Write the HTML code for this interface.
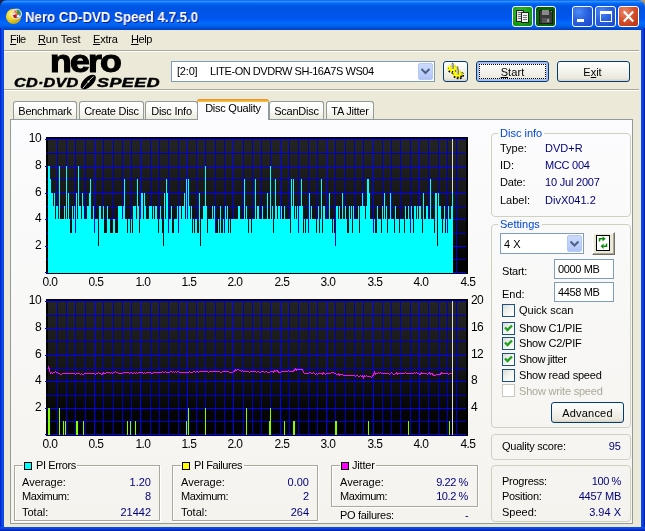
<!DOCTYPE html>
<html lang="en"><head><meta charset="utf-8"><title>Nero CD-DVD Speed 4.7.5.0</title>
<style>
html,body{margin:0;padding:0;}
body{width:645px;height:531px;overflow:hidden;background:#ece9d8;position:relative;
 font-family:"Liberation Sans",sans-serif;font-size:11px;color:#000;line-height:13px;}
*{box-sizing:border-box;}
.a{position:absolute;white-space:nowrap;}
.t{position:absolute;white-space:nowrap;line-height:13px;height:13px;}
.r{text-align:right;}
.nv{color:#00007b;}
.bl{color:#0046d5;}
#title{left:0;top:0;width:645px;height:30px;border-radius:7px 7px 0 0;
 background:linear-gradient(to bottom,#0058ee 0%,#3593ff 4%,#288eff 6%,#127dff 8%,#036ffc 10%,#0262ee 14%,#0057e5 20%,#0054e3 24%,#0055eb 56%,#005bf5 66%,#026afe 76%,#0062ef 86%,#0052d6 92%,#0048cc 96%,#0040c4 100%);}
#cl{left:0;top:0;width:8px;height:8px;background:#1c2350;}
#cr{left:637px;top:0;width:8px;height:8px;background:#b59563;}
#bl{left:0;top:28px;width:4px;height:503px;background:linear-gradient(to right,#0019cf 0,#0831d9 25%,#0d4fe6 50%,#0a4ce2 75%,#0845de 100%);}
#br{left:641px;top:28px;width:4px;height:503px;background:linear-gradient(to right,#0d4fe6 0,#0845de 40%,#0831d9 70%,#00138c 100%);}
#bb{left:0;top:527px;width:645px;height:4px;background:linear-gradient(to bottom,#0d4fe6 0,#0845de 40%,#0831d9 70%,#00138c 100%);}
#ttext{left:24.5px;top:9px;font-size:14px;font-weight:bold;color:#fff;line-height:16px;text-shadow:1px 1px 0 #0a1883;transform:scaleX(0.947);transform-origin:0 0;}
.tb{position:absolute;top:6px;width:21px;height:21px;border:1px solid #fff;border-radius:3px;}
.tbb{background:radial-gradient(circle at 30% 25%,#4d8bf5 0,#2a62e0 45%,#1b47c9 100%);}
.tbx{background:radial-gradient(circle at 30% 25%,#ea8a6c 0,#d8502c 45%,#b92f12 100%);}
.tbg1{background:radial-gradient(circle at 40% 35%,#35c035 0,#16a016 60%,#0b7d0b 100%);}
.tbg2{background:radial-gradient(circle at 50% 50%,#0c7a0c 0,#086808 60%,#035203 100%);}
.menu{top:33px;font-size:11px;}
.menu u{text-decoration:underline;}
.hl{position:absolute;height:2px;border-top:1px solid #aca899;border-bottom:1px solid #fff;}
.combo{position:absolute;background:#fff;border:1px solid #7f9db9;}
.cbtn{position:absolute;border-radius:2px;border:1px solid #b4c8f6;background:linear-gradient(to bottom,#cbd9fc 0,#c1d2fb 50%,#b0c4f5 100%);}
.btn{position:absolute;border:1px solid #003c74;border-radius:3px;background:linear-gradient(to bottom,#fff 0,#f4f3ee 45%,#ece9de 85%,#d6d0c5 100%);text-align:center;}
.tab{position:absolute;top:101px;height:18px;border:1px solid #919b9c;border-bottom:none;border-radius:3px 3px 0 0;background:linear-gradient(to bottom,#fff 0,#fafaf7 50%,#eceadd 100%);text-align:center;line-height:19px;font-size:11px;letter-spacing:-0.25px;}
.tabsel{top:99px;height:21px;background:#fcfcfe;border-top:none;z-index:3;line-height:19px;}
.tabsel:before{content:"";position:absolute;left:-1px;right:-1px;top:0;height:3px;background:linear-gradient(to bottom,#e68b2c 0,#ffc73c 100%);border-radius:3px 3px 0 0;}
#pane{left:10px;top:119px;width:623px;height:405px;border:1px solid #919b9c;background:linear-gradient(to bottom,#fcfcfe 0,#f4f3ee 100%);}
.gb{position:absolute;border:1px solid #d0d0bf;border-radius:4px;}
.gbe{position:absolute;border:1px solid #aca899;box-shadow:1px 1px 0 #fff, inset 1px 1px 0 #fff;}
.lg{position:absolute;line-height:13px;height:13px;padding:0 2px;white-space:nowrap;}
.edit{position:absolute;background:#fff;border:1px solid #7f9db9;}
.cb{position:absolute;width:13px;height:13px;border:1px solid #1c5180;background:linear-gradient(135deg,#dcdcd7 0,#f3f3f0 50%,#fff 100%);}
.cbd{border-color:#cac8bb;background:#fff;}
.sq{position:absolute;width:8px;height:8px;border:1px solid #000;}
svg.charts{position:absolute;left:0;top:0;}
.ax{position:absolute;font-size:12px;line-height:12px;height:12px;white-space:nowrap;letter-spacing:-0.6px;}

.t,.ax,.tab,.lg,#ttext,#nero,#cddvd,#speed{will-change:transform;}

</style></head>
<body>
<div class="a" id="cl"></div><div class="a" id="cr"></div>
<div class="a" id="title"></div>
<div class="a" id="bl"></div><div class="a" id="br"></div><div class="a" id="bb"></div>
<svg class="a" style="left:5px;top:7px" width="18" height="18" viewBox="0 0 18 18">
<defs><radialGradient id="gd" cx="0.35" cy="0.35" r="0.75"><stop offset="0" stop-color="#fff27a"/><stop offset="0.5" stop-color="#e8cf2a"/><stop offset="1" stop-color="#b89810"/></radialGradient></defs>
<circle cx="8.6" cy="9.4" r="7.7" fill="url(#gd)"/>
<circle cx="11.6" cy="6.9" r="4.9" fill="#d9dde2" stroke="#f4f4f4" stroke-width="0.8"/>
<path d="M11.6 6.9 L11.6 2.6 A4.3 4.3 0 0 1 15.9 6.9 Z" fill="#3a9a3a"/>
<path d="M11.6 6.9 L15.9 6.9 A4.3 4.3 0 0 1 11.6 11.2 Z" fill="#2a8fe0"/>
<path d="M11.6 6.9 L11.6 11.2 A4.3 4.3 0 0 1 7.6 8.4 Z" fill="#c01818"/>
<path d="M9.6 3.4 L13.4 9.4" stroke="#ff6a3a" stroke-width="1.5" fill="none"/>
<circle cx="13.3" cy="9.2" r="1.2" fill="#fff"/>
<circle cx="8.4" cy="5.6" r="0.8" fill="#ffd800"/>
</svg>
<div class="a" id="ttext">Nero CD-DVD Speed 4.7.5.0</div>
<div class="tb tbg1" style="left:512px"></div>
<div class="tb tbg2" style="left:535px"></div>
<div class="tb tbb" style="left:572px"></div>
<div class="tb tbb" style="left:595px"></div>
<div class="tb tbx" style="left:618px"></div>
<svg class="a" style="left:512px;top:6px" width="134" height="21" viewBox="0 0 134 21" shape-rendering="crispEdges">
<!-- copy icon -->
<rect x="4" y="4" width="7" height="11" fill="#e4e4e4" stroke="#222" stroke-width="1"/>
<rect x="5.5" y="6" width="4" height="1" fill="#777"/><rect x="5.5" y="8" width="4" height="1" fill="#777"/><rect x="5.5" y="10" width="4" height="1" fill="#777"/><rect x="5.5" y="12" width="4" height="1" fill="#777"/>
<rect x="9.5" y="6.5" width="7" height="10" fill="#f0f0f0" stroke="#222" stroke-width="1"/>
<rect x="11" y="9" width="4" height="1" fill="#777"/><rect x="11" y="11" width="4" height="1" fill="#777"/><rect x="11" y="13" width="4" height="1" fill="#777"/>
<!-- floppy -->
<rect x="27" y="4" width="13" height="13" fill="#3a3a3a" stroke="#1a1a1a" stroke-width="1"/>
<rect x="30" y="4" width="7" height="5" fill="#8a8a8a"/>
<rect x="30" y="11.5" width="8" height="5" fill="#555"/>
<rect x="35" y="12.5" width="2" height="3.5" fill="#999"/>
<rect x="38.5" y="5" width="1" height="1" fill="#2fd02f"/>
<!-- minimize -->
<rect x="65" y="13" width="7" height="3" fill="#fff"/>
<!-- maximize -->
<rect x="88.5" y="5.5" width="11" height="10" fill="none" stroke="#fff" stroke-width="1"/>
<rect x="88" y="5" width="12" height="3" fill="#fff"/>
</svg>
<svg class="a" style="left:618px;top:6px" width="21" height="21" viewBox="0 0 21 21">
<path d="M5.8 5.6 L15.2 15.4 M15.2 5.6 L5.8 15.4" stroke="#fff" stroke-width="2.2" stroke-linecap="butt" fill="none"/>
</svg>
<div class="t menu" style="left:10px;letter-spacing:-0.5px"><u>F</u>ile</div>
<div class="t menu" style="left:37.5px;letter-spacing:-0.1px"><u>R</u>un Test</div>
<div class="t menu" style="left:93px;letter-spacing:-0.2px"><u>E</u>xtra</div>
<div class="t menu" style="left:131px;letter-spacing:-0.4px"><u>H</u>elp</div>
<div class="hl" style="left:4px;top:50px;width:635px"></div>
<div class="hl" style="left:4px;top:89px;width:635px"></div>
<div class="a" id="nero" style="left:49.6px;top:43.6px;font-size:31px;line-height:36px;font-weight:bold;letter-spacing:-1.6px;-webkit-text-stroke:1.1px #000;transform:scaleX(1.15);transform-origin:0 0">nero</div>
<div class="a" id="cddvd" style="left:13.5px;top:75px;font-size:13.5px;line-height:15px;font-weight:bold;font-style:italic;letter-spacing:0.2px;-webkit-text-stroke:0.5px #000;transform:scaleX(1.2);transform-origin:0 0">CD·DVD</div>
<div class="a" id="speed" style="left:96.5px;top:75px;font-size:13.5px;line-height:15px;font-weight:bold;font-style:italic;letter-spacing:0.4px;-webkit-text-stroke:0.5px #000;transform:scaleX(1.32);transform-origin:0 0">SPEED</div>
<svg class="a" style="left:76px;top:72px" width="24" height="20" viewBox="76 72 24 20">
<ellipse cx="88.3" cy="82" rx="9.4" ry="4.8" transform="rotate(-43 88.3 82)" fill="#000"/>
<path d="M82.6 88.6 L87.6 82.6 M89.4 80.6 L93.4 76.4" stroke="#ece9d8" stroke-width="0.9" fill="none"/>
<ellipse cx="88.5" cy="81.6" rx="1.5" ry="0.9" transform="rotate(-43 88.5 81.6)" fill="#ece9d8"/>
</svg>
<div class="combo" style="left:171px;top:61px;width:264px;height:21px"></div>
<div class="t" style="left:177px;top:65px;letter-spacing:-0.2px">[2:0]</div><div class="t" style="left:209.6px;top:65px;letter-spacing:-0.45px">LITE-ON DVDRW SH-16A7S WS04</div>
<div class="cbtn" style="left:418px;top:63px;width:15px;height:17px"></div>
<div class="btn" style="left:443px;top:61px;width:25px;height:21px"></div>
<div class="btn" style="left:476px;top:61px;width:73px;height:21px;box-shadow:inset 0 0 0 2px #a8bdf0"></div>
<div class="a" style="left:479px;top:64px;width:67px;height:15px;border:1px dotted #000"></div>
<div class="t" style="left:476px;top:66px;width:73px;text-align:center;letter-spacing:0.1px"><u>S</u>tart</div>
<div class="btn" style="left:557px;top:61px;width:73px;height:21px"></div>
<div class="t" style="left:556px;top:66px;width:73px;text-align:center;letter-spacing:0px">E<u>x</u>it</div>

<div class="a" id="pane"></div>
<div class="tab" style="left:13px;width:64px">Benchmark</div>
<div class="tab" style="left:79px;width:65px">Create Disc</div>
<div class="tab" style="left:145px;width:53px">Disc Info</div>
<div class="tab tabsel" style="left:197px;width:72px">Disc Quality</div>
<div class="tab" style="left:269px;width:55px">ScanDisc</div>
<div class="tab" style="left:326px;width:48px">TA Jitter</div>

<svg class="charts" width="645" height="531" viewBox="0 0 645 531" shape-rendering="crispEdges">
<defs><linearGradient id="bg1" x1="0" y1="0" x2="0" y2="1"><stop offset="0" stop-color="#242424"/><stop offset="0.5" stop-color="#161616"/><stop offset="0.8" stop-color="#070707"/><stop offset="1" stop-color="#000"/></linearGradient><linearGradient id="bg2" x1="0" y1="0" x2="0" y2="1"><stop offset="0" stop-color="#242424"/><stop offset="0.5" stop-color="#161616"/><stop offset="0.8" stop-color="#070707"/><stop offset="1" stop-color="#000"/></linearGradient></defs>
<rect x="46" y="137" width="422" height="137" fill="#000"/>
<rect x="48" y="139" width="418" height="134" fill="url(#bg1)"/>
<rect x="57" y="139" width="1" height="134" fill="#0000c0"/>
<rect x="66" y="139" width="1" height="134" fill="#0000c0"/>
<rect x="75" y="139" width="1" height="134" fill="#0000c0"/>
<rect x="85" y="139" width="1" height="134" fill="#0000c0"/>
<rect x="94" y="139" width="1" height="134" fill="#0000ff"/>
<rect x="103" y="139" width="1" height="134" fill="#0000c0"/>
<rect x="113" y="139" width="1" height="134" fill="#0000c0"/>
<rect x="122" y="139" width="1" height="134" fill="#0000c0"/>
<rect x="131" y="139" width="1" height="134" fill="#0000c0"/>
<rect x="140" y="139" width="1" height="134" fill="#0000ff"/>
<rect x="150" y="139" width="1" height="134" fill="#0000c0"/>
<rect x="159" y="139" width="1" height="134" fill="#0000c0"/>
<rect x="168" y="139" width="1" height="134" fill="#0000c0"/>
<rect x="178" y="139" width="1" height="134" fill="#0000c0"/>
<rect x="187" y="139" width="1" height="134" fill="#0000ff"/>
<rect x="196" y="139" width="1" height="134" fill="#0000c0"/>
<rect x="205" y="139" width="1" height="134" fill="#0000c0"/>
<rect x="215" y="139" width="1" height="134" fill="#0000c0"/>
<rect x="224" y="139" width="1" height="134" fill="#0000c0"/>
<rect x="233" y="139" width="1" height="134" fill="#0000ff"/>
<rect x="243" y="139" width="1" height="134" fill="#0000c0"/>
<rect x="252" y="139" width="1" height="134" fill="#0000c0"/>
<rect x="261" y="139" width="1" height="134" fill="#0000c0"/>
<rect x="270" y="139" width="1" height="134" fill="#0000c0"/>
<rect x="280" y="139" width="1" height="134" fill="#0000ff"/>
<rect x="289" y="139" width="1" height="134" fill="#0000c0"/>
<rect x="298" y="139" width="1" height="134" fill="#0000c0"/>
<rect x="308" y="139" width="1" height="134" fill="#0000c0"/>
<rect x="317" y="139" width="1" height="134" fill="#0000c0"/>
<rect x="326" y="139" width="1" height="134" fill="#0000ff"/>
<rect x="335" y="139" width="1" height="134" fill="#0000c0"/>
<rect x="345" y="139" width="1" height="134" fill="#0000c0"/>
<rect x="354" y="139" width="1" height="134" fill="#0000c0"/>
<rect x="363" y="139" width="1" height="134" fill="#0000c0"/>
<rect x="373" y="139" width="1" height="134" fill="#0000ff"/>
<rect x="382" y="139" width="1" height="134" fill="#0000c0"/>
<rect x="391" y="139" width="1" height="134" fill="#0000c0"/>
<rect x="400" y="139" width="1" height="134" fill="#0000c0"/>
<rect x="410" y="139" width="1" height="134" fill="#0000c0"/>
<rect x="419" y="139" width="1" height="134" fill="#0000ff"/>
<rect x="428" y="139" width="1" height="134" fill="#0000c0"/>
<rect x="438" y="139" width="1" height="134" fill="#0000c0"/>
<rect x="447" y="139" width="1" height="134" fill="#0000c0"/>
<rect x="456" y="139" width="1" height="134" fill="#0000c0"/>
<rect x="45" y="272" width="421" height="1" fill="#0000ff"/>
<rect x="46" y="259" width="420" height="1" fill="#0000c0"/>
<rect x="45" y="246" width="421" height="1" fill="#0000ff"/>
<rect x="46" y="233" width="420" height="1" fill="#0000c0"/>
<rect x="45" y="219" width="421" height="1" fill="#0000ff"/>
<rect x="46" y="206" width="420" height="1" fill="#0000c0"/>
<rect x="45" y="193" width="421" height="1" fill="#0000ff"/>
<rect x="46" y="179" width="420" height="1" fill="#0000c0"/>
<rect x="45" y="166" width="421" height="1" fill="#0000ff"/>
<rect x="46" y="153" width="420" height="1" fill="#0000c0"/>
<rect x="45" y="139" width="421" height="1" fill="#0000ff"/>
<rect x="452" y="139" width="1" height="134" fill="#dcdcdc"/>
<rect x="48" y="166" width="2" height="107" fill="#00ffff"/>
<rect x="50" y="179" width="1" height="94" fill="#00ffff"/>
<rect x="51" y="193" width="2" height="80" fill="#00ffff"/>
<rect x="53" y="206" width="1" height="67" fill="#00ffff"/>
<rect x="54" y="193" width="1" height="80" fill="#00ffff"/>
<rect x="55" y="219" width="1" height="54" fill="#00ffff"/>
<rect x="56" y="206" width="2" height="67" fill="#00ffff"/>
<rect x="58" y="219" width="1" height="54" fill="#00ffff"/>
<rect x="59" y="166" width="1" height="107" fill="#00ffff"/>
<rect x="60" y="219" width="4" height="54" fill="#00ffff"/>
<rect x="64" y="206" width="1" height="67" fill="#00ffff"/>
<rect x="65" y="219" width="1" height="54" fill="#00ffff"/>
<rect x="66" y="166" width="1" height="107" fill="#00ffff"/>
<rect x="67" y="219" width="1" height="54" fill="#00ffff"/>
<rect x="68" y="193" width="1" height="80" fill="#00ffff"/>
<rect x="69" y="219" width="1" height="54" fill="#00ffff"/>
<rect x="70" y="233" width="2" height="40" fill="#00ffff"/>
<rect x="72" y="206" width="1" height="67" fill="#00ffff"/>
<rect x="73" y="219" width="1" height="54" fill="#00ffff"/>
<rect x="74" y="206" width="1" height="67" fill="#00ffff"/>
<rect x="75" y="233" width="1" height="40" fill="#00ffff"/>
<rect x="76" y="193" width="1" height="80" fill="#00ffff"/>
<rect x="77" y="219" width="1" height="54" fill="#00ffff"/>
<rect x="78" y="166" width="1" height="107" fill="#00ffff"/>
<rect x="79" y="206" width="2" height="67" fill="#00ffff"/>
<rect x="81" y="219" width="1" height="54" fill="#00ffff"/>
<rect x="82" y="193" width="1" height="80" fill="#00ffff"/>
<rect x="83" y="206" width="1" height="67" fill="#00ffff"/>
<rect x="84" y="219" width="3" height="54" fill="#00ffff"/>
<rect x="87" y="206" width="2" height="67" fill="#00ffff"/>
<rect x="89" y="193" width="1" height="80" fill="#00ffff"/>
<rect x="90" y="179" width="1" height="94" fill="#00ffff"/>
<rect x="91" y="219" width="2" height="54" fill="#00ffff"/>
<rect x="93" y="206" width="1" height="67" fill="#00ffff"/>
<rect x="94" y="233" width="1" height="40" fill="#00ffff"/>
<rect x="95" y="219" width="3" height="54" fill="#00ffff"/>
<rect x="98" y="246" width="1" height="27" fill="#00ffff"/>
<rect x="99" y="206" width="2" height="67" fill="#00ffff"/>
<rect x="101" y="219" width="2" height="54" fill="#00ffff"/>
<rect x="103" y="206" width="1" height="67" fill="#00ffff"/>
<rect x="104" y="233" width="3" height="40" fill="#00ffff"/>
<rect x="107" y="206" width="1" height="67" fill="#00ffff"/>
<rect x="108" y="219" width="2" height="54" fill="#00ffff"/>
<rect x="110" y="233" width="3" height="40" fill="#00ffff"/>
<rect x="113" y="219" width="2" height="54" fill="#00ffff"/>
<rect x="115" y="233" width="3" height="40" fill="#00ffff"/>
<rect x="118" y="206" width="4" height="67" fill="#00ffff"/>
<rect x="122" y="219" width="1" height="54" fill="#00ffff"/>
<rect x="123" y="206" width="1" height="67" fill="#00ffff"/>
<rect x="124" y="179" width="1" height="94" fill="#00ffff"/>
<rect x="125" y="219" width="2" height="54" fill="#00ffff"/>
<rect x="127" y="233" width="1" height="40" fill="#00ffff"/>
<rect x="128" y="219" width="2" height="54" fill="#00ffff"/>
<rect x="130" y="233" width="1" height="40" fill="#00ffff"/>
<rect x="131" y="219" width="1" height="54" fill="#00ffff"/>
<rect x="132" y="233" width="1" height="40" fill="#00ffff"/>
<rect x="133" y="206" width="3" height="67" fill="#00ffff"/>
<rect x="136" y="219" width="1" height="54" fill="#00ffff"/>
<rect x="137" y="179" width="1" height="94" fill="#00ffff"/>
<rect x="138" y="206" width="1" height="67" fill="#00ffff"/>
<rect x="139" y="233" width="1" height="40" fill="#00ffff"/>
<rect x="140" y="219" width="1" height="54" fill="#00ffff"/>
<rect x="141" y="193" width="2" height="80" fill="#00ffff"/>
<rect x="143" y="219" width="1" height="54" fill="#00ffff"/>
<rect x="144" y="193" width="1" height="80" fill="#00ffff"/>
<rect x="145" y="206" width="1" height="67" fill="#00ffff"/>
<rect x="146" y="219" width="3" height="54" fill="#00ffff"/>
<rect x="149" y="206" width="3" height="67" fill="#00ffff"/>
<rect x="152" y="219" width="1" height="54" fill="#00ffff"/>
<rect x="153" y="206" width="1" height="67" fill="#00ffff"/>
<rect x="154" y="219" width="1" height="54" fill="#00ffff"/>
<rect x="155" y="206" width="2" height="67" fill="#00ffff"/>
<rect x="157" y="219" width="1" height="54" fill="#00ffff"/>
<rect x="158" y="233" width="1" height="40" fill="#00ffff"/>
<rect x="159" y="219" width="1" height="54" fill="#00ffff"/>
<rect x="160" y="206" width="1" height="67" fill="#00ffff"/>
<rect x="161" y="219" width="1" height="54" fill="#00ffff"/>
<rect x="162" y="233" width="1" height="40" fill="#00ffff"/>
<rect x="163" y="246" width="1" height="27" fill="#00ffff"/>
<rect x="164" y="193" width="1" height="80" fill="#00ffff"/>
<rect x="165" y="219" width="1" height="54" fill="#00ffff"/>
<rect x="166" y="179" width="1" height="94" fill="#00ffff"/>
<rect x="167" y="193" width="1" height="80" fill="#00ffff"/>
<rect x="168" y="233" width="1" height="40" fill="#00ffff"/>
<rect x="169" y="219" width="2" height="54" fill="#00ffff"/>
<rect x="171" y="206" width="1" height="67" fill="#00ffff"/>
<rect x="172" y="233" width="2" height="40" fill="#00ffff"/>
<rect x="174" y="219" width="3" height="54" fill="#00ffff"/>
<rect x="177" y="206" width="1" height="67" fill="#00ffff"/>
<rect x="178" y="233" width="1" height="40" fill="#00ffff"/>
<rect x="179" y="206" width="2" height="67" fill="#00ffff"/>
<rect x="181" y="219" width="1" height="54" fill="#00ffff"/>
<rect x="182" y="206" width="2" height="67" fill="#00ffff"/>
<rect x="184" y="193" width="1" height="80" fill="#00ffff"/>
<rect x="185" y="219" width="1" height="54" fill="#00ffff"/>
<rect x="186" y="179" width="1" height="94" fill="#00ffff"/>
<rect x="187" y="219" width="1" height="54" fill="#00ffff"/>
<rect x="188" y="179" width="1" height="94" fill="#00ffff"/>
<rect x="189" y="206" width="1" height="67" fill="#00ffff"/>
<rect x="190" y="219" width="1" height="54" fill="#00ffff"/>
<rect x="191" y="206" width="1" height="67" fill="#00ffff"/>
<rect x="192" y="233" width="1" height="40" fill="#00ffff"/>
<rect x="193" y="219" width="1" height="54" fill="#00ffff"/>
<rect x="194" y="233" width="1" height="40" fill="#00ffff"/>
<rect x="195" y="219" width="2" height="54" fill="#00ffff"/>
<rect x="197" y="233" width="2" height="40" fill="#00ffff"/>
<rect x="199" y="193" width="1" height="80" fill="#00ffff"/>
<rect x="200" y="246" width="1" height="27" fill="#00ffff"/>
<rect x="201" y="219" width="2" height="54" fill="#00ffff"/>
<rect x="203" y="206" width="2" height="67" fill="#00ffff"/>
<rect x="205" y="166" width="1" height="107" fill="#00ffff"/>
<rect x="206" y="206" width="1" height="67" fill="#00ffff"/>
<rect x="207" y="233" width="1" height="40" fill="#00ffff"/>
<rect x="208" y="219" width="4" height="54" fill="#00ffff"/>
<rect x="212" y="206" width="1" height="67" fill="#00ffff"/>
<rect x="213" y="219" width="1" height="54" fill="#00ffff"/>
<rect x="214" y="206" width="1" height="67" fill="#00ffff"/>
<rect x="215" y="233" width="3" height="40" fill="#00ffff"/>
<rect x="218" y="219" width="1" height="54" fill="#00ffff"/>
<rect x="219" y="233" width="1" height="40" fill="#00ffff"/>
<rect x="220" y="206" width="1" height="67" fill="#00ffff"/>
<rect x="221" y="233" width="2" height="40" fill="#00ffff"/>
<rect x="223" y="219" width="1" height="54" fill="#00ffff"/>
<rect x="224" y="233" width="1" height="40" fill="#00ffff"/>
<rect x="225" y="206" width="1" height="67" fill="#00ffff"/>
<rect x="226" y="219" width="1" height="54" fill="#00ffff"/>
<rect x="227" y="206" width="1" height="67" fill="#00ffff"/>
<rect x="228" y="233" width="1" height="40" fill="#00ffff"/>
<rect x="229" y="219" width="1" height="54" fill="#00ffff"/>
<rect x="230" y="233" width="1" height="40" fill="#00ffff"/>
<rect x="231" y="219" width="7" height="54" fill="#00ffff"/>
<rect x="238" y="206" width="2" height="67" fill="#00ffff"/>
<rect x="240" y="219" width="4" height="54" fill="#00ffff"/>
<rect x="244" y="179" width="1" height="94" fill="#00ffff"/>
<rect x="245" y="219" width="1" height="54" fill="#00ffff"/>
<rect x="246" y="206" width="1" height="67" fill="#00ffff"/>
<rect x="247" y="219" width="1" height="54" fill="#00ffff"/>
<rect x="248" y="233" width="1" height="40" fill="#00ffff"/>
<rect x="249" y="219" width="2" height="54" fill="#00ffff"/>
<rect x="251" y="233" width="1" height="40" fill="#00ffff"/>
<rect x="252" y="219" width="3" height="54" fill="#00ffff"/>
<rect x="255" y="179" width="1" height="94" fill="#00ffff"/>
<rect x="256" y="219" width="1" height="54" fill="#00ffff"/>
<rect x="257" y="206" width="2" height="67" fill="#00ffff"/>
<rect x="259" y="219" width="3" height="54" fill="#00ffff"/>
<rect x="262" y="206" width="1" height="67" fill="#00ffff"/>
<rect x="263" y="219" width="4" height="54" fill="#00ffff"/>
<rect x="267" y="193" width="1" height="80" fill="#00ffff"/>
<rect x="268" y="219" width="2" height="54" fill="#00ffff"/>
<rect x="270" y="166" width="1" height="107" fill="#00ffff"/>
<rect x="271" y="219" width="1" height="54" fill="#00ffff"/>
<rect x="272" y="206" width="1" height="67" fill="#00ffff"/>
<rect x="273" y="233" width="1" height="40" fill="#00ffff"/>
<rect x="274" y="219" width="1" height="54" fill="#00ffff"/>
<rect x="275" y="179" width="1" height="94" fill="#00ffff"/>
<rect x="276" y="206" width="1" height="67" fill="#00ffff"/>
<rect x="277" y="219" width="1" height="54" fill="#00ffff"/>
<rect x="278" y="206" width="2" height="67" fill="#00ffff"/>
<rect x="280" y="219" width="1" height="54" fill="#00ffff"/>
<rect x="281" y="206" width="1" height="67" fill="#00ffff"/>
<rect x="282" y="219" width="2" height="54" fill="#00ffff"/>
<rect x="284" y="206" width="1" height="67" fill="#00ffff"/>
<rect x="285" y="219" width="5" height="54" fill="#00ffff"/>
<rect x="290" y="233" width="1" height="40" fill="#00ffff"/>
<rect x="291" y="179" width="1" height="94" fill="#00ffff"/>
<rect x="292" y="206" width="1" height="67" fill="#00ffff"/>
<rect x="293" y="179" width="1" height="94" fill="#00ffff"/>
<rect x="294" y="219" width="1" height="54" fill="#00ffff"/>
<rect x="295" y="206" width="1" height="67" fill="#00ffff"/>
<rect x="296" y="219" width="1" height="54" fill="#00ffff"/>
<rect x="297" y="206" width="1" height="67" fill="#00ffff"/>
<rect x="298" y="233" width="1" height="40" fill="#00ffff"/>
<rect x="299" y="206" width="2" height="67" fill="#00ffff"/>
<rect x="301" y="179" width="1" height="94" fill="#00ffff"/>
<rect x="302" y="206" width="1" height="67" fill="#00ffff"/>
<rect x="303" y="233" width="1" height="40" fill="#00ffff"/>
<rect x="304" y="219" width="1" height="54" fill="#00ffff"/>
<rect x="305" y="233" width="1" height="40" fill="#00ffff"/>
<rect x="306" y="219" width="2" height="54" fill="#00ffff"/>
<rect x="308" y="233" width="1" height="40" fill="#00ffff"/>
<rect x="309" y="193" width="1" height="80" fill="#00ffff"/>
<rect x="310" y="219" width="1" height="54" fill="#00ffff"/>
<rect x="311" y="206" width="1" height="67" fill="#00ffff"/>
<rect x="312" y="219" width="4" height="54" fill="#00ffff"/>
<rect x="316" y="233" width="1" height="40" fill="#00ffff"/>
<rect x="317" y="219" width="1" height="54" fill="#00ffff"/>
<rect x="318" y="206" width="1" height="67" fill="#00ffff"/>
<rect x="319" y="233" width="1" height="40" fill="#00ffff"/>
<rect x="320" y="219" width="1" height="54" fill="#00ffff"/>
<rect x="321" y="179" width="1" height="94" fill="#00ffff"/>
<rect x="322" y="233" width="1" height="40" fill="#00ffff"/>
<rect x="323" y="206" width="2" height="67" fill="#00ffff"/>
<rect x="325" y="219" width="4" height="54" fill="#00ffff"/>
<rect x="329" y="193" width="1" height="80" fill="#00ffff"/>
<rect x="330" y="219" width="2" height="54" fill="#00ffff"/>
<rect x="332" y="233" width="1" height="40" fill="#00ffff"/>
<rect x="333" y="219" width="1" height="54" fill="#00ffff"/>
<rect x="334" y="233" width="1" height="40" fill="#00ffff"/>
<rect x="335" y="246" width="1" height="27" fill="#00ffff"/>
<rect x="336" y="206" width="2" height="67" fill="#00ffff"/>
<rect x="338" y="219" width="1" height="54" fill="#00ffff"/>
<rect x="339" y="206" width="1" height="67" fill="#00ffff"/>
<rect x="340" y="219" width="2" height="54" fill="#00ffff"/>
<rect x="342" y="193" width="1" height="80" fill="#00ffff"/>
<rect x="343" y="219" width="2" height="54" fill="#00ffff"/>
<rect x="345" y="206" width="1" height="67" fill="#00ffff"/>
<rect x="346" y="219" width="1" height="54" fill="#00ffff"/>
<rect x="347" y="233" width="2" height="40" fill="#00ffff"/>
<rect x="349" y="206" width="1" height="67" fill="#00ffff"/>
<rect x="350" y="219" width="1" height="54" fill="#00ffff"/>
<rect x="351" y="206" width="1" height="67" fill="#00ffff"/>
<rect x="352" y="233" width="1" height="40" fill="#00ffff"/>
<rect x="353" y="206" width="1" height="67" fill="#00ffff"/>
<rect x="354" y="219" width="4" height="54" fill="#00ffff"/>
<rect x="358" y="206" width="1" height="67" fill="#00ffff"/>
<rect x="359" y="233" width="1" height="40" fill="#00ffff"/>
<rect x="360" y="206" width="2" height="67" fill="#00ffff"/>
<rect x="362" y="193" width="1" height="80" fill="#00ffff"/>
<rect x="363" y="206" width="2" height="67" fill="#00ffff"/>
<rect x="365" y="219" width="1" height="54" fill="#00ffff"/>
<rect x="366" y="206" width="1" height="67" fill="#00ffff"/>
<rect x="367" y="179" width="2" height="94" fill="#00ffff"/>
<rect x="369" y="193" width="1" height="80" fill="#00ffff"/>
<rect x="370" y="219" width="3" height="54" fill="#00ffff"/>
<rect x="373" y="233" width="1" height="40" fill="#00ffff"/>
<rect x="374" y="219" width="1" height="54" fill="#00ffff"/>
<rect x="375" y="233" width="2" height="40" fill="#00ffff"/>
<rect x="377" y="206" width="1" height="67" fill="#00ffff"/>
<rect x="378" y="219" width="3" height="54" fill="#00ffff"/>
<rect x="381" y="233" width="1" height="40" fill="#00ffff"/>
<rect x="382" y="206" width="1" height="67" fill="#00ffff"/>
<rect x="383" y="219" width="1" height="54" fill="#00ffff"/>
<rect x="384" y="193" width="1" height="80" fill="#00ffff"/>
<rect x="385" y="219" width="1" height="54" fill="#00ffff"/>
<rect x="386" y="206" width="1" height="67" fill="#00ffff"/>
<rect x="387" y="233" width="1" height="40" fill="#00ffff"/>
<rect x="388" y="219" width="2" height="54" fill="#00ffff"/>
<rect x="390" y="193" width="1" height="80" fill="#00ffff"/>
<rect x="391" y="219" width="3" height="54" fill="#00ffff"/>
<rect x="394" y="233" width="1" height="40" fill="#00ffff"/>
<rect x="395" y="206" width="1" height="67" fill="#00ffff"/>
<rect x="396" y="219" width="3" height="54" fill="#00ffff"/>
<rect x="399" y="233" width="1" height="40" fill="#00ffff"/>
<rect x="400" y="219" width="4" height="54" fill="#00ffff"/>
<rect x="404" y="233" width="1" height="40" fill="#00ffff"/>
<rect x="405" y="206" width="1" height="67" fill="#00ffff"/>
<rect x="406" y="219" width="2" height="54" fill="#00ffff"/>
<rect x="408" y="206" width="1" height="67" fill="#00ffff"/>
<rect x="409" y="219" width="1" height="54" fill="#00ffff"/>
<rect x="410" y="233" width="1" height="40" fill="#00ffff"/>
<rect x="411" y="206" width="1" height="67" fill="#00ffff"/>
<rect x="412" y="219" width="1" height="54" fill="#00ffff"/>
<rect x="413" y="233" width="1" height="40" fill="#00ffff"/>
<rect x="414" y="206" width="2" height="67" fill="#00ffff"/>
<rect x="416" y="219" width="1" height="54" fill="#00ffff"/>
<rect x="417" y="206" width="1" height="67" fill="#00ffff"/>
<rect x="418" y="219" width="1" height="54" fill="#00ffff"/>
<rect x="419" y="206" width="2" height="67" fill="#00ffff"/>
<rect x="421" y="219" width="1" height="54" fill="#00ffff"/>
<rect x="422" y="233" width="1" height="40" fill="#00ffff"/>
<rect x="423" y="193" width="1" height="80" fill="#00ffff"/>
<rect x="424" y="219" width="2" height="54" fill="#00ffff"/>
<rect x="426" y="206" width="2" height="67" fill="#00ffff"/>
<rect x="428" y="219" width="2" height="54" fill="#00ffff"/>
<rect x="430" y="179" width="1" height="94" fill="#00ffff"/>
<rect x="431" y="219" width="3" height="54" fill="#00ffff"/>
<rect x="434" y="233" width="1" height="40" fill="#00ffff"/>
<rect x="435" y="193" width="2" height="80" fill="#00ffff"/>
<rect x="437" y="246" width="1" height="27" fill="#00ffff"/>
<rect x="438" y="193" width="1" height="80" fill="#00ffff"/>
<rect x="439" y="206" width="2" height="67" fill="#00ffff"/>
<rect x="441" y="219" width="1" height="54" fill="#00ffff"/>
<rect x="442" y="233" width="1" height="40" fill="#00ffff"/>
<rect x="443" y="219" width="1" height="54" fill="#00ffff"/>
<rect x="444" y="206" width="1" height="67" fill="#00ffff"/>
<rect x="445" y="233" width="1" height="40" fill="#00ffff"/>
<rect x="446" y="219" width="1" height="54" fill="#00ffff"/>
<rect x="447" y="233" width="1" height="40" fill="#00ffff"/>
<rect x="448" y="206" width="1" height="67" fill="#00ffff"/>
<rect x="449" y="219" width="2" height="54" fill="#00ffff"/>
<rect x="451" y="206" width="1" height="67" fill="#00ffff"/>
<rect x="452" y="193" width="1" height="80" fill="#00ffff"/>
<rect x="46" y="299" width="422" height="137" fill="#000"/>
<rect x="48" y="301" width="418" height="134" fill="url(#bg2)"/>
<rect x="57" y="301" width="1" height="134" fill="#0000c0"/>
<rect x="66" y="301" width="1" height="134" fill="#0000c0"/>
<rect x="75" y="301" width="1" height="134" fill="#0000c0"/>
<rect x="85" y="301" width="1" height="134" fill="#0000c0"/>
<rect x="94" y="301" width="1" height="134" fill="#0000ff"/>
<rect x="103" y="301" width="1" height="134" fill="#0000c0"/>
<rect x="113" y="301" width="1" height="134" fill="#0000c0"/>
<rect x="122" y="301" width="1" height="134" fill="#0000c0"/>
<rect x="131" y="301" width="1" height="134" fill="#0000c0"/>
<rect x="140" y="301" width="1" height="134" fill="#0000ff"/>
<rect x="150" y="301" width="1" height="134" fill="#0000c0"/>
<rect x="159" y="301" width="1" height="134" fill="#0000c0"/>
<rect x="168" y="301" width="1" height="134" fill="#0000c0"/>
<rect x="178" y="301" width="1" height="134" fill="#0000c0"/>
<rect x="187" y="301" width="1" height="134" fill="#0000ff"/>
<rect x="196" y="301" width="1" height="134" fill="#0000c0"/>
<rect x="205" y="301" width="1" height="134" fill="#0000c0"/>
<rect x="215" y="301" width="1" height="134" fill="#0000c0"/>
<rect x="224" y="301" width="1" height="134" fill="#0000c0"/>
<rect x="233" y="301" width="1" height="134" fill="#0000ff"/>
<rect x="243" y="301" width="1" height="134" fill="#0000c0"/>
<rect x="252" y="301" width="1" height="134" fill="#0000c0"/>
<rect x="261" y="301" width="1" height="134" fill="#0000c0"/>
<rect x="270" y="301" width="1" height="134" fill="#0000c0"/>
<rect x="280" y="301" width="1" height="134" fill="#0000ff"/>
<rect x="289" y="301" width="1" height="134" fill="#0000c0"/>
<rect x="298" y="301" width="1" height="134" fill="#0000c0"/>
<rect x="308" y="301" width="1" height="134" fill="#0000c0"/>
<rect x="317" y="301" width="1" height="134" fill="#0000c0"/>
<rect x="326" y="301" width="1" height="134" fill="#0000ff"/>
<rect x="335" y="301" width="1" height="134" fill="#0000c0"/>
<rect x="345" y="301" width="1" height="134" fill="#0000c0"/>
<rect x="354" y="301" width="1" height="134" fill="#0000c0"/>
<rect x="363" y="301" width="1" height="134" fill="#0000c0"/>
<rect x="373" y="301" width="1" height="134" fill="#0000ff"/>
<rect x="382" y="301" width="1" height="134" fill="#0000c0"/>
<rect x="391" y="301" width="1" height="134" fill="#0000c0"/>
<rect x="400" y="301" width="1" height="134" fill="#0000c0"/>
<rect x="410" y="301" width="1" height="134" fill="#0000c0"/>
<rect x="419" y="301" width="1" height="134" fill="#0000ff"/>
<rect x="428" y="301" width="1" height="134" fill="#0000c0"/>
<rect x="438" y="301" width="1" height="134" fill="#0000c0"/>
<rect x="447" y="301" width="1" height="134" fill="#0000c0"/>
<rect x="456" y="301" width="1" height="134" fill="#0000c0"/>
<rect x="45" y="434" width="421" height="1" fill="#0000ff"/>
<rect x="46" y="421" width="420" height="1" fill="#0000c0"/>
<rect x="45" y="408" width="421" height="1" fill="#0000ff"/>
<rect x="46" y="395" width="420" height="1" fill="#0000c0"/>
<rect x="45" y="381" width="421" height="1" fill="#0000ff"/>
<rect x="46" y="368" width="420" height="1" fill="#0000c0"/>
<rect x="45" y="355" width="421" height="1" fill="#0000ff"/>
<rect x="46" y="341" width="420" height="1" fill="#0000c0"/>
<rect x="45" y="328" width="421" height="1" fill="#0000ff"/>
<rect x="46" y="315" width="420" height="1" fill="#0000c0"/>
<rect x="45" y="301" width="421" height="1" fill="#0000ff"/>
<rect x="48" y="408" width="2" height="27" fill="#80ff00"/>
<rect x="59" y="408" width="1" height="27" fill="#80ff00"/>
<rect x="63" y="421" width="1" height="14" fill="#80ff00"/>
<rect x="65" y="421" width="1" height="14" fill="#80ff00"/>
<rect x="76" y="421" width="2" height="14" fill="#80ff00"/>
<rect x="83" y="421" width="1" height="14" fill="#80ff00"/>
<rect x="127" y="421" width="1" height="14" fill="#80ff00"/>
<rect x="130" y="421" width="1" height="14" fill="#80ff00"/>
<rect x="135" y="421" width="1" height="14" fill="#80ff00"/>
<rect x="186" y="421" width="1" height="14" fill="#80ff00"/>
<rect x="188" y="408" width="1" height="27" fill="#80ff00"/>
<rect x="205" y="408" width="1" height="27" fill="#80ff00"/>
<rect x="246" y="408" width="1" height="27" fill="#80ff00"/>
<rect x="269" y="421" width="1" height="14" fill="#80ff00"/>
<rect x="270" y="408" width="1" height="27" fill="#80ff00"/>
<rect x="284" y="421" width="1" height="14" fill="#80ff00"/>
<rect x="293" y="421" width="2" height="14" fill="#80ff00"/>
<rect x="335" y="421" width="2" height="14" fill="#80ff00"/>
<rect x="368" y="421" width="1" height="14" fill="#80ff00"/>
<rect x="408" y="421" width="1" height="14" fill="#80ff00"/>
<rect x="449" y="421" width="1" height="14" fill="#80ff00"/>
<polyline points="48.5,366.5 49.5,370.5 50.5,373.5 51.5,372.5 52.5,373.5 53.5,372.5 54.5,372.5 55.5,371.5 56.5,372.5 57.5,372.5 58.5,373.5 59.5,373.5 60.5,374.5 61.5,374.5 62.5,373.5 63.5,373.5 64.5,373.5 65.5,373.5 66.5,373.5 67.5,373.5 68.5,373.5 69.5,373.5 70.5,373.5 71.5,373.5 72.5,373.5 73.5,373.5 74.5,373.5 75.5,374.5 76.5,373.5 77.5,373.5 78.5,373.5 79.5,373.5 80.5,374.5 81.5,373.5 82.5,374.5 83.5,374.5 84.5,373.5 85.5,373.5 86.5,373.5 87.5,373.5 88.5,373.5 89.5,373.5 90.5,373.5 91.5,373.5 92.5,373.5 93.5,373.5 94.5,373.5 95.5,374.5 96.5,373.5 97.5,373.5 98.5,372.5 99.5,373.5 100.5,373.5 101.5,374.5 102.5,374.5 103.5,372.5 104.5,373.5 105.5,373.5 106.5,372.5 107.5,372.5 108.5,372.5 109.5,372.5 110.5,373.5 111.5,372.5 112.5,373.5 113.5,372.5 114.5,372.5 115.5,371.5 116.5,372.5 117.5,372.5 118.5,373.5 119.5,373.5 120.5,373.5 121.5,373.5 122.5,373.5 123.5,372.5 124.5,372.5 125.5,372.5 126.5,372.5 127.5,372.5 128.5,372.5 129.5,373.5 130.5,372.5 131.5,372.5 132.5,373.5 133.5,373.5 134.5,372.5 135.5,373.5 136.5,372.5 137.5,373.5 138.5,372.5 139.5,372.5 140.5,372.5 141.5,372.5 142.5,372.5 143.5,373.5 144.5,372.5 145.5,373.5 146.5,372.5 147.5,372.5 148.5,372.5 149.5,372.5 150.5,372.5 151.5,373.5 152.5,373.5 153.5,372.5 154.5,372.5 155.5,372.5 156.5,372.5 157.5,372.5 158.5,372.5 159.5,372.5 160.5,372.5 161.5,372.5 162.5,371.5 163.5,372.5 164.5,372.5 165.5,371.5 166.5,372.5 167.5,372.5 168.5,372.5 169.5,372.5 170.5,371.5 171.5,371.5 172.5,372.5 173.5,371.5 174.5,372.5 175.5,371.5 176.5,372.5 177.5,371.5 178.5,371.5 179.5,372.5 180.5,372.5 181.5,372.5 182.5,372.5 183.5,372.5 184.5,372.5 185.5,372.5 186.5,372.5 187.5,372.5 188.5,372.5 189.5,371.5 190.5,372.5 191.5,372.5 192.5,372.5 193.5,371.5 194.5,371.5 195.5,372.5 196.5,371.5 197.5,371.5 198.5,372.5 199.5,371.5 200.5,371.5 201.5,371.5 202.5,371.5 203.5,371.5 204.5,371.5 205.5,371.5 206.5,371.5 207.5,371.5 208.5,372.5 209.5,371.5 210.5,371.5 211.5,371.5 212.5,371.5 213.5,371.5 214.5,371.5 215.5,371.5 216.5,371.5 217.5,371.5 218.5,371.5 219.5,371.5 220.5,372.5 221.5,372.5 222.5,371.5 223.5,371.5 224.5,371.5 225.5,371.5 226.5,371.5 227.5,371.5 228.5,371.5 229.5,372.5 230.5,372.5 231.5,372.5 232.5,372.5 233.5,371.5 234.5,371.5 235.5,369.5 236.5,370.5 237.5,369.5 238.5,369.5 239.5,370.5 240.5,370.5 241.5,371.5 242.5,370.5 243.5,371.5 244.5,371.5 245.5,371.5 246.5,371.5 247.5,371.5 248.5,371.5 249.5,372.5 250.5,371.5 251.5,371.5 252.5,371.5 253.5,371.5 254.5,371.5 255.5,371.5 256.5,372.5 257.5,371.5 258.5,371.5 259.5,372.5 260.5,372.5 261.5,371.5 262.5,371.5 263.5,371.5 264.5,372.5 265.5,371.5 266.5,371.5 267.5,372.5 268.5,372.5 269.5,372.5 270.5,371.5 271.5,371.5 272.5,371.5 273.5,372.5 274.5,370.5 275.5,371.5 276.5,370.5 277.5,370.5 278.5,372.5 279.5,372.5 280.5,372.5 281.5,371.5 282.5,371.5 283.5,371.5 284.5,371.5 285.5,371.5 286.5,371.5 287.5,371.5 288.5,370.5 289.5,371.5 290.5,371.5 291.5,371.5 292.5,371.5 293.5,371.5 294.5,369.5 295.5,368.5 296.5,370.5 297.5,369.5 298.5,369.5 299.5,369.5 300.5,369.5 301.5,369.5 302.5,369.5 303.5,372.5 304.5,373.5 305.5,373.5 306.5,373.5 307.5,373.5 308.5,373.5 309.5,372.5 310.5,372.5 311.5,373.5 312.5,373.5 313.5,372.5 314.5,373.5 315.5,374.5 316.5,373.5 317.5,374.5 318.5,373.5 319.5,373.5 320.5,373.5 321.5,373.5 322.5,374.5 323.5,372.5 324.5,373.5 325.5,374.5 326.5,373.5 327.5,373.5 328.5,373.5 329.5,373.5 330.5,373.5 331.5,372.5 332.5,372.5 333.5,372.5 334.5,373.5 335.5,373.5 336.5,374.5 337.5,374.5 338.5,373.5 339.5,375.5 340.5,374.5 341.5,374.5 342.5,374.5 343.5,375.5 344.5,375.5 345.5,375.5 346.5,375.5 347.5,375.5 348.5,375.5 349.5,375.5 350.5,375.5 351.5,375.5 352.5,375.5 353.5,375.5 354.5,375.5 355.5,376.5 356.5,375.5 357.5,375.5 358.5,376.5 359.5,376.5 360.5,375.5 361.5,376.5 362.5,375.5 363.5,377.5 364.5,375.5 365.5,376.5 366.5,375.5 367.5,376.5 368.5,376.5 369.5,376.5 370.5,376.5 371.5,377.5 372.5,376.5 373.5,374.5 374.5,372.5 375.5,374.5 376.5,373.5 377.5,373.5 378.5,372.5 379.5,373.5 380.5,372.5 381.5,373.5 382.5,373.5 383.5,373.5 384.5,373.5 385.5,373.5 386.5,373.5 387.5,373.5 388.5,373.5 389.5,374.5 390.5,373.5 391.5,372.5 392.5,373.5 393.5,374.5 394.5,374.5 395.5,373.5 396.5,372.5 397.5,374.5 398.5,373.5 399.5,373.5 400.5,373.5 401.5,373.5 402.5,373.5 403.5,373.5 404.5,373.5 405.5,372.5 406.5,373.5 407.5,373.5 408.5,373.5 409.5,373.5 410.5,373.5 411.5,373.5 412.5,373.5 413.5,373.5 414.5,372.5 415.5,373.5 416.5,372.5 417.5,373.5 418.5,373.5 419.5,374.5 420.5,374.5 421.5,372.5 422.5,373.5 423.5,373.5 424.5,373.5 425.5,373.5 426.5,373.5 427.5,374.5 428.5,373.5 429.5,372.5 430.5,374.5 431.5,373.5 432.5,373.5 433.5,375.5 434.5,375.5 435.5,375.5 436.5,374.5 437.5,374.5 438.5,374.5 439.5,374.5 440.5,374.5 441.5,372.5 442.5,373.5 443.5,373.5 444.5,373.5 445.5,373.5 446.5,373.5 447.5,373.5 448.5,374.5 449.5,373.5 450.5,373.5 451.5,373.5" fill="none" stroke="#f010f0" stroke-width="1"/>
<rect x="452" y="301" width="1" height="134" fill="#dcdcdc"/>
</svg>
<div class="ax r" style="left:11.4px;width:30px;top:132px">10</div>
<div class="ax r" style="left:11.4px;width:30px;top:159px">8</div>
<div class="ax r" style="left:11.4px;width:30px;top:186px">6</div>
<div class="ax r" style="left:11.4px;width:30px;top:212px">4</div>
<div class="ax r" style="left:11.4px;width:30px;top:239px">2</div>
<div class="ax r" style="left:11.4px;width:30px;top:294px">10</div>
<div class="ax r" style="left:11.4px;width:30px;top:321px">8</div>
<div class="ax r" style="left:11.4px;width:30px;top:348px">6</div>
<div class="ax r" style="left:11.4px;width:30px;top:374px">4</div>
<div class="ax r" style="left:11.4px;width:30px;top:401px">2</div>
<div class="ax" style="left:470.5px;top:294px">20</div>
<div class="ax" style="left:470.5px;top:321px">16</div>
<div class="ax" style="left:470.5px;top:348px">12</div>
<div class="ax" style="left:470.5px;top:374px">8</div>
<div class="ax" style="left:470.5px;top:401px">4</div>
<div class="ax" style="left:29.6px;width:40px;text-align:center;top:276px">0.0</div>
<div class="ax" style="left:76.0px;width:40px;text-align:center;top:276px">0.5</div>
<div class="ax" style="left:122.5px;width:40px;text-align:center;top:276px">1.0</div>
<div class="ax" style="left:168.9px;width:40px;text-align:center;top:276px">1.5</div>
<div class="ax" style="left:215.4px;width:40px;text-align:center;top:276px">2.0</div>
<div class="ax" style="left:261.8px;width:40px;text-align:center;top:276px">2.5</div>
<div class="ax" style="left:308.3px;width:40px;text-align:center;top:276px">3.0</div>
<div class="ax" style="left:354.7px;width:40px;text-align:center;top:276px">3.5</div>
<div class="ax" style="left:401.2px;width:40px;text-align:center;top:276px">4.0</div>
<div class="ax" style="left:447.6px;width:40px;text-align:center;top:276px">4.5</div>
<div class="ax" style="left:29.6px;width:40px;text-align:center;top:438px">0.0</div>
<div class="ax" style="left:76.0px;width:40px;text-align:center;top:438px">0.5</div>
<div class="ax" style="left:122.5px;width:40px;text-align:center;top:438px">1.0</div>
<div class="ax" style="left:168.9px;width:40px;text-align:center;top:438px">1.5</div>
<div class="ax" style="left:215.4px;width:40px;text-align:center;top:438px">2.0</div>
<div class="ax" style="left:261.8px;width:40px;text-align:center;top:438px">2.5</div>
<div class="ax" style="left:308.3px;width:40px;text-align:center;top:438px">3.0</div>
<div class="ax" style="left:354.7px;width:40px;text-align:center;top:438px">3.5</div>
<div class="ax" style="left:401.2px;width:40px;text-align:center;top:438px">4.0</div>
<div class="ax" style="left:447.6px;width:40px;text-align:center;top:438px">4.5</div>

<!-- right panel -->
<div class="gb" style="left:491px;top:133px;width:140px;height:84px"></div>
<div class="lg bl" style="left:498px;top:126.8px;background:#fbfbfc">Disc info</div>
<div class="t" style="left:500px;top:141.5px">Type:</div><div class="t nv" style="left:545px;top:141.5px">DVD+R</div>
<div class="t" style="left:500px;top:159px">ID:</div><div class="t nv" style="left:545px;top:159px;letter-spacing:-0.25px">MCC 004</div>
<div class="t" style="left:500px;top:176px;letter-spacing:-0.2px">Date:</div><div class="t nv" style="left:545px;top:176px;letter-spacing:-0.2px">10 Jul 2007</div>
<div class="t" style="left:500px;top:194px">Label:</div><div class="t nv" style="left:545px;top:194px">DivX041.2</div>

<div class="gb" style="left:491px;top:224px;width:140px;height:204px"></div>
<div class="lg bl" style="left:498px;top:217.7px;background:#f9f9f9">Settings</div>
<div class="combo" style="left:500px;top:233px;width:84px;height:21px"></div>
<div class="t" style="left:504px;top:238px">4 X</div>
<div class="cbtn" style="left:567px;top:235px;width:15px;height:17px"></div>
<div class="a" style="left:592px;top:232px;width:23px;height:23px;background:#ece9d8;border:1px solid;border-color:#fff #716f64 #716f64 #fff;box-shadow:inset -1px -1px 0 #aca899, inset 1px 1px 0 #f8f7f2"></div>
<div class="a" style="left:596px;top:235px;width:14px;height:16px;background:#fff;border:1.5px solid #000"></div>
<div class="t" style="left:502px;top:264.8px;letter-spacing:-0.2px">Start:</div>
<div class="edit" style="left:554px;top:259px;width:60px;height:20px"></div>
<div class="t" style="left:558px;top:262.8px;letter-spacing:-0.35px">0000 MB</div>
<div class="t" style="left:502px;top:287.8px">End:</div>
<div class="edit" style="left:554px;top:282px;width:60px;height:20px"></div>
<div class="t" style="left:558px;top:285.8px;letter-spacing:-0.35px">4458 MB</div>
<div class="cb" style="left:502px;top:304px"></div><div class="t" style="left:519px;top:304px">Quick scan</div>
<div class="cb" style="left:502px;top:322px"></div><div class="t" style="left:519px;top:322px;letter-spacing:-0.2px">Show C1/PIE</div>
<div class="cb" style="left:502px;top:337px"></div><div class="t" style="left:519px;top:337px;letter-spacing:-0.2px">Show C2/PIF</div>
<div class="cb" style="left:502px;top:353px"></div><div class="t" style="left:519px;top:353px;letter-spacing:-0.35px">Show jitter</div>
<div class="cb" style="left:502px;top:369px"></div><div class="t" style="left:519px;top:369px;letter-spacing:-0.2px">Show read speed</div>
<div class="cb cbd" style="left:502px;top:384px"></div><div class="t" style="left:519px;top:385px;color:#aca899;letter-spacing:-0.2px">Show write speed</div>
<svg class="a" style="left:0;top:0" width="645" height="531" viewBox="0 0 645 531">
<path d="M421.5 69 L425.5 73 L429.5 69" stroke="#4d6185" stroke-width="2" fill="none"/>
<path d="M570.5 241.5 L574.5 245.5 L578.5 241.5" stroke="#4d6185" stroke-width="2" fill="none"/>
<!-- gears -->
<ellipse cx="453.29999999999995" cy="69.5" rx="4.3" ry="3" fill="#000"/>
<ellipse cx="453.29999999999995" cy="69.5" rx="4.8" ry="3.4" fill="none" stroke="#000" stroke-width="1.6" stroke-dasharray="1.7 1.5"/>
<ellipse cx="452.4" cy="68.4" rx="3.9" ry="2.7" fill="#ffff00"/>
<ellipse cx="452.4" cy="68.4" rx="4.5" ry="3.2" fill="none" stroke="#ffff00" stroke-width="1.6" stroke-dasharray="1.7 1.5"/>
<rect x="451.2" y="63.400000000000006" width="2.4" height="5.6" fill="#c8c8c8"/><rect x="452.59999999999997" y="63.400000000000006" width="1" height="5.6" fill="#707070"/><rect x="452.0" y="62.800000000000004" width="1" height="1" fill="#555"/>
<ellipse cx="458.5" cy="75.1" rx="4.3" ry="3" fill="#000"/>
<ellipse cx="458.5" cy="75.1" rx="4.8" ry="3.4" fill="none" stroke="#000" stroke-width="1.6" stroke-dasharray="1.7 1.5"/>
<ellipse cx="457.6" cy="74.0" rx="3.9" ry="2.7" fill="#ffff00"/>
<ellipse cx="457.6" cy="74.0" rx="4.5" ry="3.2" fill="none" stroke="#ffff00" stroke-width="1.6" stroke-dasharray="1.7 1.5"/>
<rect x="456.40000000000003" y="69.0" width="2.4" height="5.6" fill="#c8c8c8"/><rect x="457.8" y="69.0" width="1" height="5.6" fill="#707070"/><rect x="457.20000000000005" y="68.4" width="1" height="1" fill="#555"/>
<!-- refresh arrows -->
<path d="M599.5 241.5 L599.5 238.8 L603 238.8" stroke="#078a07" stroke-width="1.5" fill="none"/>
<path d="M602.6 236.2 L605.6 238.8 L602.6 241.4 Z" fill="#078a07"/>
<path d="M606.5 243.5 L606.5 246.3 L603.5 246.3" stroke="#078a07" stroke-width="1.5" fill="none"/>
<path d="M603.6 243.6 L600.6 246.3 L603.6 249 Z" fill="#078a07"/>
<!-- checks -->
<path d="M505 327.5 L507.5 330 L512 325.5" stroke="#21a121" stroke-width="2.4" fill="none" stroke-linecap="butt" stroke-linejoin="miter"/>
<path d="M505 342.5 L507.5 345 L512 340.5" stroke="#21a121" stroke-width="2.4" fill="none"/>
<path d="M505 358.5 L507.5 361 L512 356.5" stroke="#21a121" stroke-width="2.4" fill="none"/>
</svg>
<div class="btn" style="left:551px;top:402px;width:73px;height:21px"></div>
<div class="t" style="left:551px;top:406.8px;width:73px;text-align:center;letter-spacing:0.2px">Advanced</div>

<div class="gb" style="left:491px;top:434px;width:140px;height:26px"></div>
<div class="t" style="left:502px;top:440px;letter-spacing:-0.25px">Quality score:</div><div class="t nv r" style="left:561px;width:60px;top:440px">95</div>
<div class="gb" style="left:491px;top:465px;width:140px;height:57px"></div>
<div class="t" style="left:502px;top:474.5px;letter-spacing:-0.25px">Progress:</div><div class="t nv r" style="left:551px;width:70px;top:474.5px;letter-spacing:-0.4px">100 %</div>
<div class="t" style="left:502px;top:490px;letter-spacing:-0.3px">Position:</div><div class="t nv r" style="left:551px;width:70px;top:490px;letter-spacing:-0.25px">4457 MB</div>
<div class="t" style="left:502px;top:505.6px">Speed:</div><div class="t nv r" style="left:551px;width:70px;top:505.6px">3.94 X</div>

<!-- bottom stats -->
<div class="gbe" style="left:14px;top:465px;width:146px;height:56px"></div>
<div class="lg" style="left:23px;top:459px;width:54px;background:#f5f4ef"></div>
<div class="sq" style="left:24px;top:462px;background:#00ffff"></div>
<div class="t" style="left:35.5px;top:459px;letter-spacing:-0.4px">PI Errors</div>
<div class="t" style="left:22px;top:475.5px">Average:</div><div class="t nv r" style="left:91px;width:60px;top:475.5px">1.20</div>
<div class="t" style="left:22px;top:490px;letter-spacing:-0.45px">Maximum:</div><div class="t nv r" style="left:91px;width:60px;top:490px">8</div>
<div class="t" style="left:22px;top:505.6px">Total:</div><div class="t nv r" style="left:91px;width:60px;top:505.6px">21442</div>

<div class="gbe" style="left:172px;top:465px;width:146px;height:56px"></div>
<div class="lg" style="left:181px;top:459px;width:63px;background:#f5f4ef"></div>
<div class="sq" style="left:182px;top:462px;background:#ffff00"></div>
<div class="t" style="left:193.5px;top:459px;letter-spacing:-0.4px">PI Failures</div>
<div class="t" style="left:181px;top:475.5px">Average:</div><div class="t nv r" style="left:249px;width:60px;top:475.5px">0.00</div>
<div class="t" style="left:181px;top:490px;letter-spacing:-0.45px">Maximum:</div><div class="t nv r" style="left:249px;width:60px;top:490px">2</div>
<div class="t" style="left:181px;top:505.6px">Total:</div><div class="t nv r" style="left:249px;width:60px;top:505.6px">264</div>

<div class="gbe" style="left:331px;top:465px;width:147px;height:42px"></div>
<div class="lg" style="left:340px;top:459px;width:36px;background:#f5f4ef"></div>
<div class="sq" style="left:341px;top:462px;background:#ff00ff"></div>
<div class="t" style="left:351.5px;top:459px;letter-spacing:-0.2px">Jitter</div>
<div class="t" style="left:340px;top:475.5px">Average:</div><div class="t nv r" style="left:408px;width:60px;top:475.5px;letter-spacing:-0.4px">9.22 %</div>
<div class="t" style="left:340px;top:490px;letter-spacing:-0.45px">Maximum:</div><div class="t nv r" style="left:408px;width:60px;top:490px;letter-spacing:-0.4px">10.2 %</div>
<div class="t" style="left:340px;top:509.4px;letter-spacing:-0.3px">PO failures:</div><div class="t nv" style="left:465px;top:509px">-</div>

</body></html>
